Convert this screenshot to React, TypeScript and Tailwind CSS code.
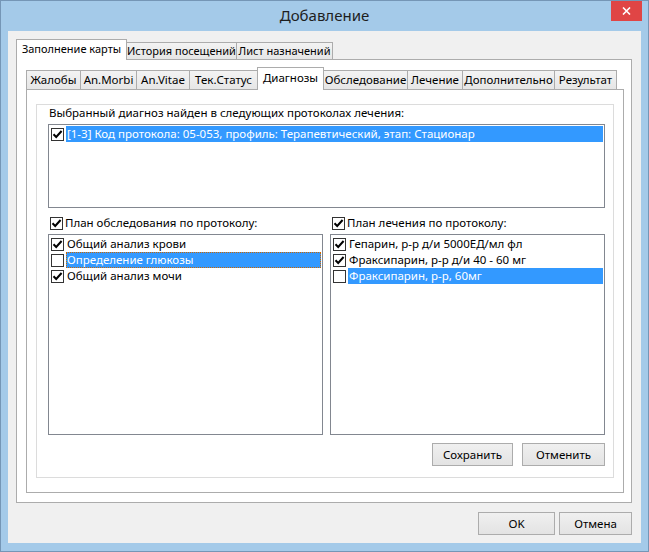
import React from 'react';
import clsx from 'clsx';

interface TabProps {
  label: string;
  width: string;
  active?: boolean;
  first?: boolean;
  inner?: boolean;
}

interface RowProps {
  label: string;
  checked: boolean;
  selected?: boolean;
  focused?: boolean;
}

const CheckBox = ({ checked }: { checked: boolean }) => (
  <span className="w-[13px] h-[13px] border border-[#333333] bg-white flex items-center justify-center shrink-0">
    {checked && (
      <svg width="11" height="11" viewBox="0 0 11 11">
        <path d="M1.5 5.2 L4.2 8 L9.6 2" fill="none" stroke="#000" strokeWidth="2" />
      </svg>
    )}
  </span>
);

// вкладка (внешняя или внутренняя)
const Tab = ({ label, width, active, first, inner }: TabProps) => (
  <div
    className={clsx(
      'border border-b-0 border-[#acacac] flex items-center justify-center whitespace-nowrap overflow-hidden text-black',
      inner ? 'text-[11.5px]' : 'text-[11px]',
      width,
      !first && '-ml-px',
      active
        ? clsx('bg-white relative z-10 -mb-px', inner ? 'h-[23px] pb-[2px]' : 'h-[21px] pb-[1px]')
        : clsx('bg-gradient-to-b from-[#f3f3f3] to-[#e6e6e6]', inner ? 'h-[19px]' : 'h-[17px]')
    )}
  >
    {label}
  </div>
);

const ListRow = ({ label, checked, selected, focused }: RowProps) => (
  <div className="h-[16px] flex items-center pl-[2px]">
    <CheckBox checked={checked} />
    <span
      className={clsx(
        'ml-[2px] mr-[1px] flex-1 h-full pl-[1px] leading-[16px] whitespace-nowrap overflow-hidden text-[11.5px]',
        selected ? 'bg-[#3399ff] text-white' : 'text-black',
        focused && 'outline-1 outline-dotted outline-[#cc6600] -outline-offset-1'
      )}
    >
      {label}
    </span>
  </div>
);

const WinButton = ({ label, width }: { label: string; width: string }) => (
  <button
    className={clsx(
      'h-[23px] border border-[#acacac] bg-gradient-to-b from-[#f0f0f0] to-[#e3e3e3] text-[11.5px] text-black flex items-center justify-center',
      width
    )}
  >
    {label}
  </button>
);

const outerTabs = [
  { label: 'Заполнение карты', width: 'w-[111px]', active: true },
  { label: 'История посещений', width: 'w-[111px]' },
  { label: 'Лист назначений', width: 'w-[97px]' },
];

const innerTabs = [
  { label: 'Жалобы', width: 'w-[55px]' },
  { label: 'An.Morbi', width: 'w-[57px]' },
  { label: 'An.Vitae', width: 'w-[54px]' },
  { label: 'Тек.Статус', width: 'w-[69px]' },
  { label: 'Диагнозы', width: 'w-[67px]', active: true },
  { label: 'Обследование', width: 'w-[85px]' },
  { label: 'Лечение', width: 'w-[56px]' },
  { label: 'Дополнительно', width: 'w-[93px]' },
  { label: 'Результат', width: 'w-[63px]' },
];

export default function App() {
  return (
    <div className="w-[649px] h-[552px] bg-[#a4cae9] border border-[#7596b6] flex flex-col font-['Noto_Sans',sans-serif]">
      {/* заголовок окна */}
      <div className="h-[30px] flex items-start">
        <div className="w-[37px]" />
        <div className="flex-1 h-full flex items-center justify-center text-[15px] text-[#1e1e1e] pb-[1px]">
          Добавление
        </div>
        <div className="w-[31px] h-[20px] mr-[6px] bg-[#e04545] flex items-center justify-center">
          <svg width="9" height="8" viewBox="0 0 9 8">
            <path d="M1 0.5 L8 7.5 M8 0.5 L1 7.5" stroke="#fff" strokeWidth="1.6" />
          </svg>
        </div>
      </div>

      {/* клиентская часть */}
      <div className="mx-[7px] h-[512px] bg-[#f0f0f0] pt-[8px] pl-[8px] pr-[9px] flex flex-col">
        <div className="flex items-end">
          {outerTabs.map((t, i) => (
            <Tab key={t.label} {...t} first={i === 0} />
          ))}
        </div>

        <div className="w-[616px] h-[444px] border border-[#acacac] bg-white pt-[7px] pl-[9px]">
          <div className="flex items-end">
            {innerTabs.map((t, i) => (
              <Tab key={t.label} {...t} first={i === 0} inner />
            ))}
          </div>

          <div className="w-[598px] h-[404px] border border-[#acacac] bg-white pt-[14px] pl-[9px]">
            <div className="w-[578px] h-[374px] border border-[#dcdcdc] pl-[11px]">
              <div className="h-[16px] leading-[16px] pl-[1px] text-[11.5px] text-black">
                Выбранный диагноз найден в следующих протоколах лечения:
              </div>
              <div className="mt-[3px] w-[557px] h-[84px] border border-[#828790] bg-white pt-[1px]">
                <ListRow
                  label="[1-3] Код протокола: 05-053, профиль: Терапевтический, этап: Стационар"
                  checked
                  selected
                />
              </div>

              <div className="mt-[7px] w-[557px] flex gap-[7px]">
                <div className="w-[275px] h-[16px] flex items-center pl-[2px]">
                  <CheckBox checked />
                  <span className="ml-[2px] text-[11.5px] text-black whitespace-nowrap">План обследования по протоколу:</span>
                </div>
                <div className="w-[275px] h-[16px] flex items-center pl-[2px]">
                  <CheckBox checked />
                  <span className="ml-[2px] text-[11.5px] text-black whitespace-nowrap">План лечения по протоколу:</span>
                </div>
              </div>

              <div className="mt-[3px] w-[557px] flex gap-[7px]">
                <div className="w-[275px] h-[201px] border border-[#828790] bg-white pt-[1px]">
                  <ListRow label="Общий анализ крови" checked />
                  <ListRow label="Определение глюкозы" checked={false} selected focused />
                  <ListRow label="Общий анализ мочи" checked />
                </div>
                <div className="w-[275px] h-[201px] border border-[#828790] bg-white pt-[1px]">
                  <ListRow label="Гепарин, р-р д/и 5000ЕД/мл фл" checked />
                  <ListRow label="Фраксипарин, р-р д/и 40 - 60 мг" checked />
                  <ListRow label="Фраксипарин, р-р, 60мг" checked={false} selected />
                </div>
              </div>

              <div className="mt-[8px] w-[557px] flex justify-end gap-[9px]">
                <WinButton label="Сохранить" width="w-[81px]" />
                <WinButton label="Отменить" width="w-[83px]" />
              </div>
            </div>
          </div>
        </div>

        <div className="mt-[9px] flex justify-end gap-[4px]">
          <WinButton label="OK" width="w-[77px]" />
          <WinButton label="Отмена" width="w-[73px]" />
        </div>
      </div>
    </div>
  );
}
